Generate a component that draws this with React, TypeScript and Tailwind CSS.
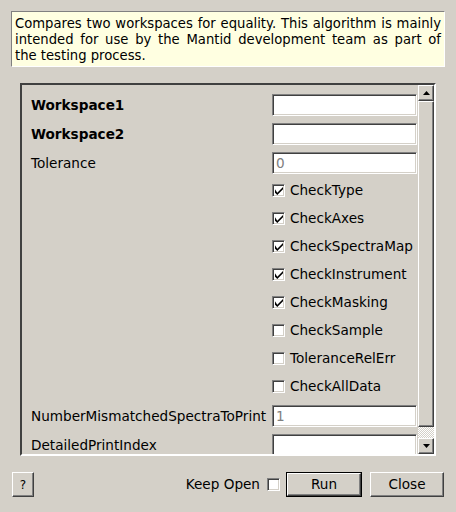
import React from "react";

type Row =
  | { kind: "input"; label: string; bold?: boolean; placeholder?: string }
  | { kind: "check"; label: string; checked: boolean };

const rows: Row[] = [
  { kind: "input", label: "Workspace1", bold: true },
  { kind: "input", label: "Workspace2", bold: true },
  { kind: "input", label: "Tolerance", placeholder: "0" },
  { kind: "check", label: "CheckType", checked: true },
  { kind: "check", label: "CheckAxes", checked: true },
  { kind: "check", label: "CheckSpectraMap", checked: true },
  { kind: "check", label: "CheckInstrument", checked: true },
  { kind: "check", label: "CheckMasking", checked: true },
  { kind: "check", label: "CheckSample", checked: false },
  { kind: "check", label: "ToleranceRelErr", checked: false },
  { kind: "check", label: "CheckAllData", checked: false },
  { kind: "input", label: "NumberMismatchedSpectraToPrint", placeholder: "1" },
  { kind: "input", label: "DetailedPrintIndex" },
];

const sunken =
  "border border-t-[#808080] border-l-[#808080] border-b-white border-r-white shadow-[inset_1px_1px_0_#404040,inset_-1px_-1px_0_#d4d0c8]";
const raised =
  "border border-t-white border-l-white border-b-[#404040] border-r-[#404040] shadow-[inset_-1px_-1px_0_#808080]";

function CheckBox({ checked }: { checked: boolean }) {
  return (
    <span className={`w-[13px] h-[13px] bg-white flex items-center justify-center shrink-0 ${sunken}`}>
      {checked ? (
        <svg width="8" height="8" viewBox="0 0 7 7">
          <path d="M0 2v3l2 2 5-5V0L2 5z" fill="#000" />
        </svg>
      ) : null}
    </span>
  );
}

function Field({ placeholder }: { placeholder?: string }) {
  return (
    <div className={`w-[145px] h-[22px] bg-white flex items-center px-[3px] text-[#808080] ${sunken}`}>
      {placeholder ?? ""}
    </div>
  );
}

function Arrow({ up }: { up: boolean }) {
  return (
    <svg width="7" height="4" viewBox="0 0 7 4">
      <path d={up ? "M3.5 0L7 4H0z" : "M0 0h7L3.5 4z"} fill="#000" />
    </svg>
  );
}

export default function App() {
  return (
    <div className="w-[456px] h-[512px] bg-[#d4d0c8] flex flex-col text-[13.6px] text-black font-['DejaVu_Sans',sans-serif] overflow-hidden">
      <div className="mx-[11px] mt-[11px] h-[56px] bg-[#ffffe1] border border-t-[#808080] border-l-[#808080] border-b-white border-r-white px-[3px] pt-[4px] text-[13.2px] leading-[16px] text-justify">
        Compares two workspaces for equality. This algorithm is mainly intended for use by the
        Mantid development team as part of the testing process.
      </div>

      <div className="mx-[20px] mt-[16px] h-[373px] border-2 border-t-[#404040] border-l-[#404040] border-b-white border-r-white flex">
        <div className="flex-1 overflow-hidden pl-[9px] pr-px pt-[8px] flex flex-col gap-[7px]">
          {rows.map((r) =>
            r.kind === "input" ? (
              <div key={r.label} className="h-[22px] flex items-center shrink-0 pt-[2px]">
                <span className={`w-[241px] ${r.bold ? "font-bold" : ""}`}>{r.label}</span>
                <Field placeholder={r.placeholder} />
              </div>
            ) : (
              <div key={r.label} className="h-[21px] flex items-center shrink-0">
                <span className="w-[241px]" />
                <CheckBox checked={r.checked} />
                <span className="ml-[5px]">{r.label}</span>
              </div>
            )
          )}
        </div>
        <div className="w-[16px] flex flex-col">
          <div className={`h-[16px] bg-[#d4d0c8] flex items-center justify-center ${raised}`}>
            <Arrow up />
          </div>
          <div className={`flex-1 bg-[#d4d0c8] ${raised}`} />
          <div className="h-[11px] bg-[repeating-conic-gradient(#ffffff_0_25%,#d4d0c8_0_50%)] bg-[length:2px_2px]" />
          <div className={`h-[16px] bg-[#d4d0c8] flex items-center justify-center ${raised}`}>
            <Arrow up={false} />
          </div>
        </div>
      </div>

      <div className="mt-[16px] px-[12px] flex items-center">
        <button className={`w-[22px] h-[25px] ${raised} text-[12px]`}>?</button>
        <span className="ml-auto">Keep Open</span>
        <span className="ml-[7px]">
          <CheckBox checked={false} />
        </span>
        <button className="ml-[6px] w-[76px] h-[25px] border border-black">
          <span className={`block w-full h-full leading-[21px] ${raised}`}>Run</span>
        </button>
        <button className={`ml-[8px] w-[74px] h-[25px] ${raised}`}>Close</button>
      </div>
    </div>
  );
}
